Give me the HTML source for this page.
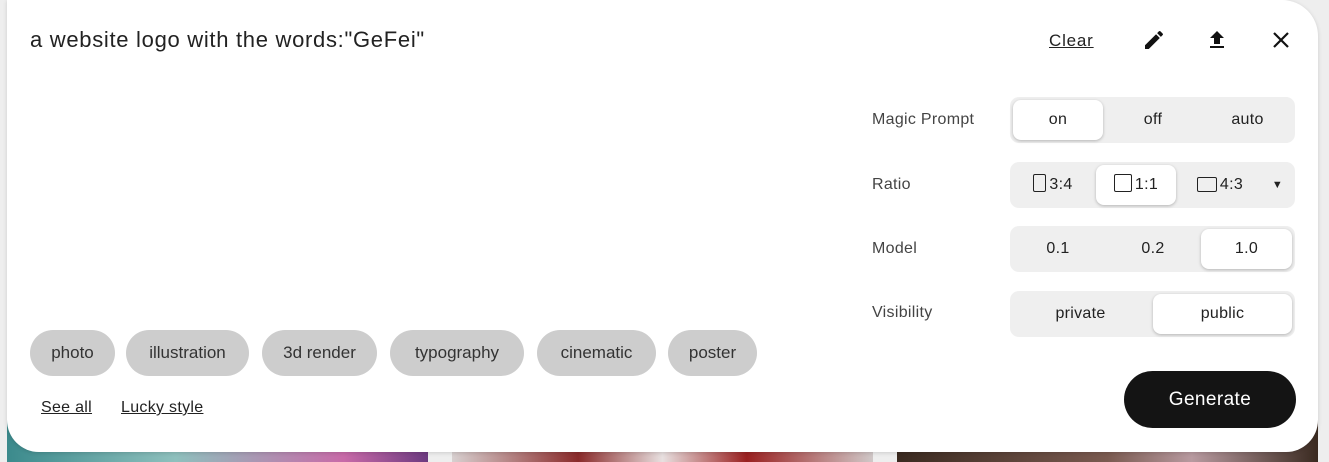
<!DOCTYPE html>
<html><head><style>
body{margin:0;width:1329px;height:462px;background:#eeeeee;position:relative;overflow:hidden;font-family:"Liberation Sans",sans-serif;color:#222}
.img{position:absolute;top:420px;height:42px}
.card{position:absolute;left:7px;top:0;width:1311px;height:452px;background:#fff;border-radius:0 0 32px 32px;border-top-right-radius:36px;box-shadow:0 1px 4px rgba(0,0,0,.15)}
.abs{position:absolute}
.prompt{left:23px;top:27px;font-size:22px;letter-spacing:0.7px;color:#222}
.lbl{font-size:16px;color:#444;left:865px;letter-spacing:0.3px}
.seg{position:absolute;left:1003px;width:285px;height:46px;background:#efefef;border-radius:9px}
.opt{position:absolute;top:3px;height:40px;line-height:40px;text-align:center;font-size:16px;color:#222;letter-spacing:0.3px}
.sel{background:#fff;border-radius:8px;box-shadow:0 1px 3px rgba(0,0,0,.25)}
.chip{position:absolute;top:330px;height:46px;line-height:46px;background:#cdcdcd;border-radius:23px;font-size:17px;color:#333;text-align:center}
.u{text-decoration:underline;font-size:16px;color:#222;letter-spacing:0.3px}
.gen{left:1117px;top:371px;width:172px;height:57px;background:#141414;color:#fff;border-radius:29px;text-align:center;line-height:57px;font-size:19px;letter-spacing:0.4px}
.box{display:inline-block;border:1.6px solid #222;border-radius:2px;vertical-align:-3px;margin-right:3px}
</style></head><body>
<div class="img" style="left:7px;width:421px;background:linear-gradient(90deg,#3b8a8c,#8ec0bd 40%,#c86aa8 80%,#6c3a80)"></div>
<div class="img" style="left:452px;width:421px;background:linear-gradient(90deg,#d8d0d0,#8a2a2a 30%,#e8e0e0 50%,#9a2020 70%,#d0c8c8)"></div>
<div class="img" style="left:897px;width:421px;background:linear-gradient(90deg,#3a2a20,#7a5a50 50%,#b89aa0 70%,#3a2a20)"></div>
<div class="card">
<div class="abs prompt">a website logo with the words:"GeFei"</div>
<div class="abs u" style="left:1042px;top:31px;font-size:17px;letter-spacing:0.8px">Clear</div>
<svg class="abs" style="left:1135px;top:28px" width="24" height="24" viewBox="0 0 24 24"><path d="M3 17.25V21h3.75L17.8 9.94l-3.75-3.75L3 17.25zM20.7 7.04a1 1 0 000-1.41l-2.34-2.34a1 1 0 00-1.41 0l-1.83 1.83 3.75 3.75 1.83-1.83z" fill="#111"/></svg>
<svg class="abs" style="left:1198px;top:28px" width="24" height="24" viewBox="0 0 24 24"><path d="M5 20h14v-2H5v2zm0-10h4v6h6v-6h4l-7-7-7 7z" fill="#111"/></svg>
<svg class="abs" style="left:1262px;top:28px" width="24" height="24" viewBox="0 0 24 24"><path d="M5 5L19 19M19 5L5 19" stroke="#111" stroke-width="2.2"/></svg>
<div class="abs lbl" style="top:111px">Magic Prompt</div>
<div class="seg" style="top:97px"><div class="opt sel" style="left:3px;width:90px">on</div><div class="opt" style="left:98px;width:90px">off</div><div class="opt" style="left:190px;width:95px">auto</div></div>
<div class="abs lbl" style="top:176px">Ratio</div>
<div class="seg" style="top:162px"><div class="opt" style="left:3px;width:80px"><span class="box" style="width:11px;height:16px"></span>3:4</div><div class="opt sel" style="left:86px;width:80px"><span class="box" style="width:16px;height:16px"></span>1:1</div><div class="opt" style="left:170px;width:80px"><span class="box" style="width:18px;height:13px"></span>4:3</div><div class="opt" style="left:255px;width:25px;font-size:11px">▼</div></div>
<div class="abs lbl" style="top:240px">Model</div>
<div class="seg" style="top:226px"><div class="opt" style="left:3px;width:90px">0.1</div><div class="opt" style="left:98px;width:90px">0.2</div><div class="opt sel" style="left:191px;width:91px">1.0</div></div>
<div class="abs lbl" style="top:304px">Visibility</div>
<div class="seg" style="top:291px"><div class="opt" style="left:3px;width:135px">private</div><div class="opt sel" style="left:143px;width:139px">public</div></div>
<div class="chip" style="left:23px;width:85px">photo</div>
<div class="chip" style="left:119px;width:123px">illustration</div>
<div class="chip" style="left:255px;width:115px">3d render</div>
<div class="chip" style="left:383px;width:134px">typography</div>
<div class="chip" style="left:530px;width:119px">cinematic</div>
<div class="chip" style="left:661px;width:89px">poster</div>
<div class="abs u" style="left:34px;top:399px">See all</div>
<div class="abs u" style="left:114px;top:399px">Lucky style</div>
<div class="abs gen">Generate</div>
</div>
</body></html>
